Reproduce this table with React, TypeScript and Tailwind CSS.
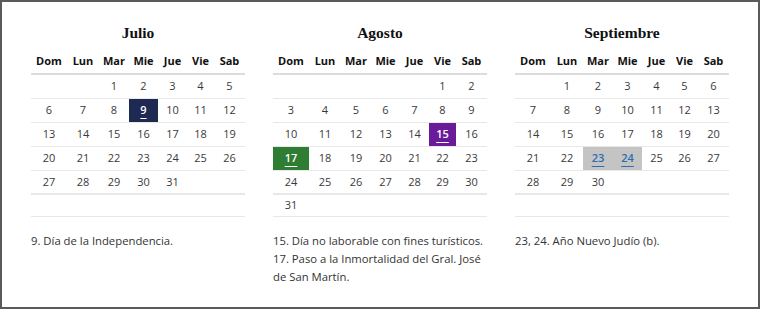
import React from 'react';

type Mark = 'navy' | 'purple' | 'green' | 'gray';

interface Month {
  name: string;
  offset: number; // weekday of day 1 (0 = Dom)
  days: number;
  marks: Record<number, Mark>;
  notes: string[];
}

const weekdays = ['Dom', 'Lun', 'Mar', 'Mie', 'Jue', 'Vie', 'Sab'];
const colWidths = ['w-[36px]', 'w-[32px]', 'w-[30px]', 'w-[29px]', 'w-[29px]', 'w-[27px]', 'w-[31px]'];

const months: Month[] = [
  {
    name: 'Julio',
    offset: 2,
    days: 31,
    marks: { 9: 'navy' },
    notes: ['9. Día de la Independencia.']
  },
  {
    name: 'Agosto',
    offset: 5,
    days: 31,
    marks: { 15: 'purple', 17: 'green' },
    notes: ['15. Día no laborable con fines turísticos.', '17. Paso a la Inmortalidad del Gral. José de San Martín.']
  },
  {
    name: 'Septiembre',
    offset: 1,
    days: 30,
    marks: { 23: 'gray', 24: 'gray' },
    notes: ['23, 24. Año Nuevo Judío (b).']
  }
];

const markCell: Record<Mark, string> = {
  navy: 'bg-[#1e2a52] text-white font-semibold',
  purple: 'bg-[#6a1b9a] text-white font-semibold',
  green: 'bg-[#2e7d32] text-white font-semibold',
  gray: 'bg-[#c4c4c4] text-[#2a6db0] font-semibold'
};

const buildWeeks = (m: Month) => {
  const cells: (number | null)[] = [];
  for (let i = 0; i < m.offset; i++) cells.push(null);
  for (let d = 1; d <= m.days; d++) cells.push(d);
  while (cells.length < 42) cells.push(null);
  const weeks: (number | null)[][] = [];
  for (let w = 0; w < 6; w++) weeks.push(cells.slice(w * 7, w * 7 + 7));
  return weeks;
};

const MonthTable: React.FC<{ month: Month }> = ({ month }) => {
  const weeks = buildWeeks(month);
  return (
    <div>
      <h2 className="text-center text-[15.5px] leading-[20px] font-bold text-[#111] mb-[7px] font-['Liberation_Serif',serif]">
        {month.name}
      </h2>
      <table className="w-full border-collapse table-fixed">
        <thead>
          <tr className="h-[24px] border-b-2 border-[#dcdcdc]">
            {weekdays.map((w, i) => (
              <th key={w} className={`${colWidths[i]} p-0 text-[11px] font-bold text-[#111] text-center`}>
                {w}
              </th>
            ))}
          </tr>
        </thead>
        <tbody>
          {weeks.map((week, wi) => (
            <tr
              key={wi}
              className={wi === 4 ? 'h-[24px] border-b-2 border-[#e8e8e8]' : wi === 5 ? 'h-[22px] border-b border-[#e8e8e8]' : 'h-[24px] border-b border-[#e8e8e8]'}
            >
              {week.map((d, di) => {
                const mark = d ? month.marks[d] : undefined;
                return (
                  <td
                    key={di}
                    className={`p-0 text-center text-[11px] ${mark ? markCell[mark] : 'text-[#3a3a3a]'}`}
                  >
                    {d !== null && (
                      <span className={mark ? 'underline underline-offset-[4px] decoration-1' : ''}>{d}</span>
                    )}
                  </td>
                );
              })}
            </tr>
          ))}
        </tbody>
      </table>
      <div className="mt-[15px] text-[11.3px] leading-[18px] text-[#333]">
        {month.notes.map(n => (
          <p key={n}>{n}</p>
        ))}
      </div>
    </div>
  );
};

export default function App() {
  return (
    <div className="w-[760px] h-[309px] border-2 border-[#5a5a5a] bg-white font-['Open_Sans',sans-serif]">
      <div className="grid grid-cols-3 gap-[28px] px-[29px] pt-[21px]">
        {months.map(m => (
          <MonthTable key={m.name} month={m} />
        ))}
      </div>
    </div>
  );
}
